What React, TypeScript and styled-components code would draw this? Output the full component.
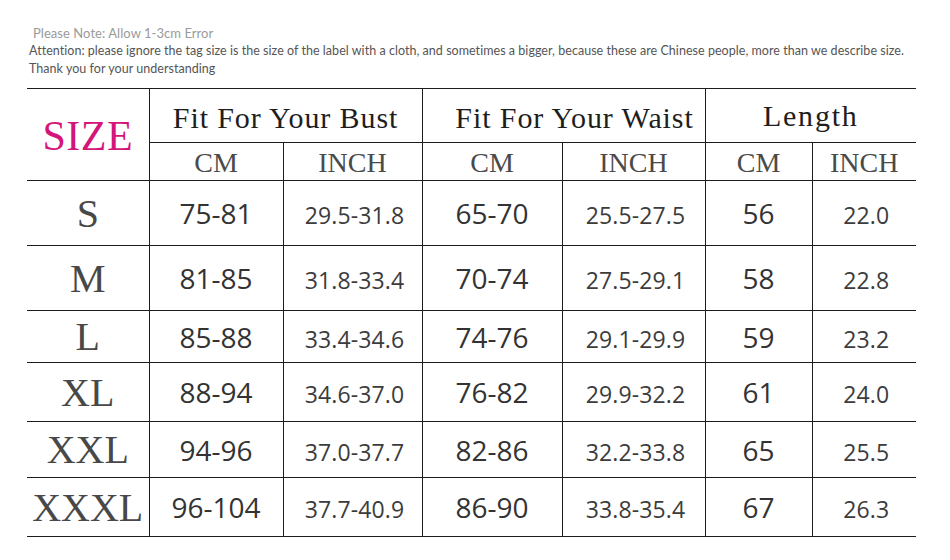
import React from "react";
import styled, { createGlobalStyle } from "styled-components";

const Global = createGlobalStyle`
  html, body { margin: 0; padding: 0; background: #fff; }
  body { width: 950px; height: 560px; overflow: hidden; }
`;

const Page = styled.div`
  width: 950px;
  height: 560px;
  background: #fff;
  display: flex;
  flex-direction: column;
`;

const Notes = styled.div`
  padding: 24px 0 0 29px;
  font-family: Lato, "Open Sans", sans-serif;
  display: flex;
  flex-direction: column;
`;

const NoteLine = styled.div<{ $muted?: boolean; $indent?: number }>`
  font-size: ${(p) => (p.$muted ? "13px" : "12.5px")};
  letter-spacing: ${(p) => (p.$muted ? "0.05px" : "0.04px")};
  line-height: 18px;
  height: 18px;
  white-space: nowrap;
  color: ${(p) => (p.$muted ? "#9a9a9a" : "#555")};
  padding-left: ${(p) => p.$indent ?? 0}px;
`;

const Table = styled.table`
  margin: 10px 0 0 27px;
  width: 889px;
  table-layout: fixed;
  border-collapse: collapse;
`;

const Row = styled.tr<{ $h: number }>`
  height: ${(p) => p.$h}px;
`;

const cellBase = `
  border-top: 1px solid #1c1c1c;
  border-bottom: 1px solid #1c1c1c;
  border-left: none;
  padding: 0;
  text-align: center;
  vertical-align: middle;
  white-space: nowrap;
`;

const SizeHead = styled.th`
  ${cellBase}
  border-right: 1px solid #1c1c1c;
  font-family: "Liberation Serif", serif;
  font-weight: normal;
  font-size: 42px;
  letter-spacing: 0.5px;
  color: #d4157a;
  padding-top: 2px;
`;

const GroupHead = styled.th<{ $last?: boolean; $shift?: number }>`
  ${cellBase}
  border-right: ${(p) => (p.$last ? "none" : "1px solid #1c1c1c")};
  font-family: "Liberation Serif", serif;
  font-weight: normal;
  font-size: 30px;
  letter-spacing: ${(p) => (p.$last ? "1.8px" : "0.9px")};
  color: #1e1e1e;
  padding-top: ${(p) => (p.$last ? "0" : "4px")};
  padding-left: ${(p) => (p.$shift ?? 0) * 2}px;
`;

const SubHead = styled.th<{ $last?: boolean }>`
  ${cellBase}
  border-right: ${(p) => (p.$last ? "none" : "1px solid #1c1c1c")};
  font-family: "Liberation Serif", serif;
  font-weight: normal;
  font-size: 28px;
  color: #4a4a4a;
  padding-top: 3px;
`;

const SizeCell = styled.td`
  ${cellBase}
  border-right: 1px solid #1c1c1c;
  font-family: "Liberation Serif", serif;
  font-size: 40px;
  color: #484848;
`;

const ValueCell = styled.td<{ $big?: boolean; $last?: boolean }>`
  ${cellBase}
  border-right: ${(p) => (p.$last ? "none" : "1px solid #1c1c1c")};
  font-family: "Open Sans", sans-serif;
  font-size: ${(p) => (p.$big ? "28px" : "23px")};
  letter-spacing: ${(p) => (p.$big ? "0" : "0.1px")};
  color: ${(p) => (p.$big ? "#333" : "#3c3c3c")};
  padding-top: ${(p) => (p.$big ? "0" : "4px")};
  padding-left: ${(p) => (p.$big ? "0" : "4px")};
`;

const widths = [122, 134, 139, 140, 143, 107, 104];

const rows: { size: string; h: number; v: string[] }[] = [
  { size: "S", h: 65, v: ["75-81", "29.5-31.8", "65-70", "25.5-27.5", "56", "22.0"] },
  { size: "M", h: 65, v: ["81-85", "31.8-33.4", "70-74", "27.5-29.1", "58", "22.8"] },
  { size: "L", h: 52, v: ["85-88", "33.4-34.6", "74-76", "29.1-29.9", "59", "23.2"] },
  { size: "XL", h: 59, v: ["88-94", "34.6-37.0", "76-82", "29.9-32.2", "61", "24.0"] },
  { size: "XXL", h: 56, v: ["94-96", "37.0-37.7", "82-86", "32.2-33.8", "65", "25.5"] },
  { size: "XXXL", h: 59, v: ["96-104", "37.7-40.9", "86-90", "33.8-35.4", "67", "26.3"] },
];

export default function App() {
  return (
    <Page>
      <Global />
      <Notes>
        <NoteLine $muted $indent={4}>Please Note: Allow 1-3cm Error</NoteLine>
        <NoteLine>
          Attention: please ignore the tag size is the size of the label with a cloth, and sometimes a bigger, because these are Chinese people, more than we describe size.
        </NoteLine>
        <NoteLine>Thank you for your understanding</NoteLine>
      </Notes>
      <Table>
        <colgroup>
          {widths.map((w, i) => (
            <col key={i} style={{ width: w }} />
          ))}
        </colgroup>
        <thead>
          <Row $h={54}>
            <SizeHead rowSpan={2}>SIZE</SizeHead>
            <GroupHead colSpan={2}>Fit For Your Bust</GroupHead>
            <GroupHead colSpan={2} $shift={11}>Fit For Your Waist</GroupHead>
            <GroupHead colSpan={2} $last>Length</GroupHead>
          </Row>
          <Row $h={38}>
            <SubHead>CM</SubHead>
            <SubHead>INCH</SubHead>
            <SubHead>CM</SubHead>
            <SubHead>INCH</SubHead>
            <SubHead>CM</SubHead>
            <SubHead $last>INCH</SubHead>
          </Row>
        </thead>
        <tbody>
          {rows.map((r) => (
            <Row key={r.size} $h={r.h}>
              <SizeCell>{r.size}</SizeCell>
              {r.v.map((val, i) => (
                <ValueCell key={i} $big={i % 2 === 0} $last={i === 5}>
                  {val}
                </ValueCell>
              ))}
            </Row>
          ))}
        </tbody>
      </Table>
    </Page>
  );
}
